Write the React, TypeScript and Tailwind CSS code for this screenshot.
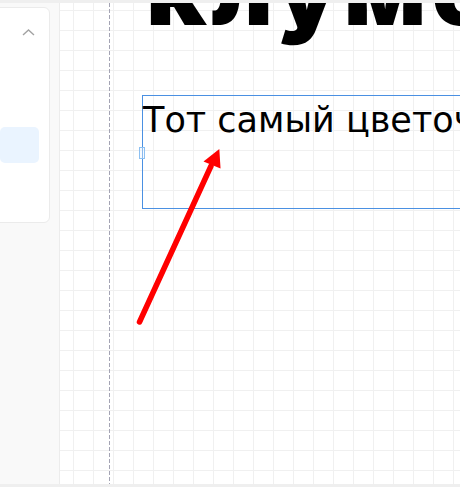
import React from "react";

export default function App() {
  return (
    <div className="w-[460px] h-[487px] flex flex-col overflow-hidden bg-white">
      <div className="h-[3px] bg-[#efefef] shrink-0" />
      <div className="flex h-[481px] shrink-0">
        {/* left panel */}
        <div className="w-[59px] bg-[#f9f9f9] shrink-0 overflow-hidden pt-[4px]">
          <div className="ml-[-20px] w-[70px] h-[216px] bg-white border border-[#ebebeb] rounded-[6px] flex flex-col">
            <svg className="self-end mr-[13px] mt-[19px] shrink-0" width="16" height="10" viewBox="0 0 16 10">
              <polyline points="3,8 8.5,3 14,8" fill="none" stroke="#a3a3a3" strokeWidth="1.4" />
            </svg>
            <div className="ml-[19px] mt-[90px] w-[39px] h-[36px] bg-[#eaf4ff] rounded-[5px]" />
          </div>
        </div>
        {/* canvas */}
        <div className="flex-1 relative overflow-hidden border-l border-[#ececec] bg-white bg-[linear-gradient(to_right,#f0f0f0_1px,transparent_1px),linear-gradient(to_bottom,#f0f0f0_1px,transparent_1px)] bg-[size:20px_20px] bg-[position:13px_7px]">
          {/* dashed guide */}
          <div className="absolute left-[49px] top-0 bottom-0 w-px bg-[linear-gradient(to_bottom,#a4a4b4_4px,transparent_4px)] bg-[size:1px_6px]" />
          {/* heading */}
          <div className="absolute left-[86px] top-[-62px] whitespace-nowrap leading-none text-[98px] font-black text-black tracking-[5px] [font-family:Inter,'Noto_Sans',sans-serif]">
            клумбы
          </div>
          {/* text box */}
          <div className="absolute left-[82px] top-[92px] w-[400px] h-[114px] border border-[#4a90e2] pt-[7px]">
            <div className="absolute left-[-4px] top-[51px] w-[6px] h-[12px] border border-[#8cc0f2] bg-[#eaf4ff]/40" />
            <div className="whitespace-nowrap leading-none text-[35px] text-black [font-family:'DejaVu_Sans',sans-serif]">
              Тот самый цветочек
            </div>
          </div>
          {/* arrow */}
          <svg className="absolute left-0 top-0" width="400" height="481" viewBox="0 0 400 481">
            <g transform="translate(-60,-3)">
              <line x1="139.5" y1="322" x2="211" y2="166" stroke="#ff0000" strokeWidth="5.5" strokeLinecap="round" />
              <polygon points="219.3,149 203.5,161.5 220.5,168.5" fill="#ff0000" />
            </g>
          </svg>
        </div>
      </div>
      <div className="h-[3px] bg-[#efefef] shrink-0" />
    </div>
  );
}
